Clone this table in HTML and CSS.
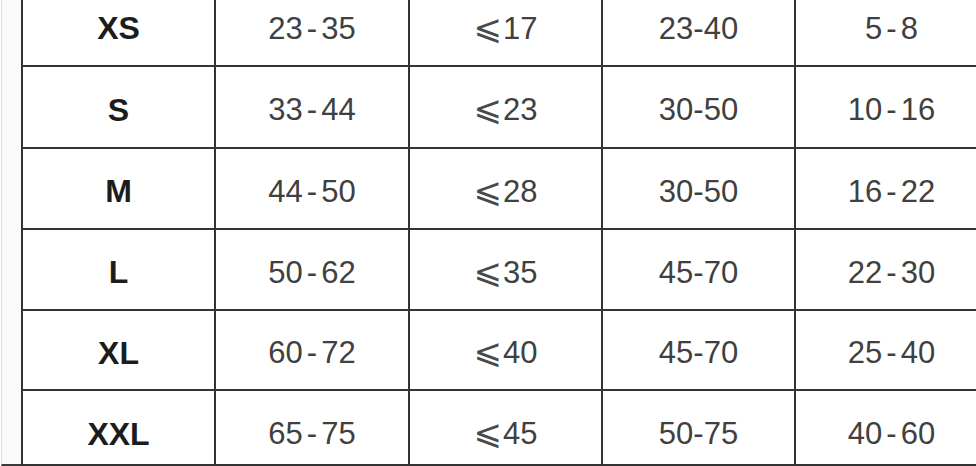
FILE: index.html
```html
<!DOCTYPE html>
<html lang="en">
<head>
<meta charset="utf-8">
<title>Size chart</title>
<link rel="stylesheet" href="styles.css">
</head>
<body>
<div class="page">
  <div class="rail"></div>
  <div class="chart">
    <div class="cell size">XS</div>
    <div class="cell num">23<span class="dash">-</span>35</div>
    <div class="cell num"><span class="le">⩽</span>17</div>
    <div class="cell num">23-40</div>
    <div class="cell num">5<span class="dash">-</span>8</div>

    <div class="cell size">S</div>
    <div class="cell num">33<span class="dash">-</span>44</div>
    <div class="cell num"><span class="le">⩽</span>23</div>
    <div class="cell num">30-50</div>
    <div class="cell num">10<span class="dash">-</span>16</div>

    <div class="cell size">M</div>
    <div class="cell num">44<span class="dash">-</span>50</div>
    <div class="cell num"><span class="le">⩽</span>28</div>
    <div class="cell num">30-50</div>
    <div class="cell num">16<span class="dash">-</span>22</div>

    <div class="cell size">L</div>
    <div class="cell num">50<span class="dash">-</span>62</div>
    <div class="cell num"><span class="le">⩽</span>35</div>
    <div class="cell num">45-70</div>
    <div class="cell num">22<span class="dash">-</span>30</div>

    <div class="cell size">XL</div>
    <div class="cell num">60<span class="dash">-</span>72</div>
    <div class="cell num"><span class="le">⩽</span>40</div>
    <div class="cell num">45-70</div>
    <div class="cell num">25<span class="dash">-</span>40</div>

    <div class="cell size last">XXL</div>
    <div class="cell num last">65<span class="dash">-</span>75</div>
    <div class="cell num last"><span class="le">⩽</span>45</div>
    <div class="cell num last">50-75</div>
    <div class="cell num last">40<span class="dash">-</span>60</div>
  </div>
</div>
</body>
</html>
```

FILE: styles.css
```css
html, body {
  margin: 0;
  padding: 0;
  background: #ffffff;
  overflow: hidden;
}

.page {
  display: flex;
  align-items: flex-start;
  width: 976px;
  height: 466px;
  overflow: hidden;
}

.rail {
  flex: 0 0 19px;
  margin-left: 1px;
  height: 464px;
  border-left: 1px solid #dcdcdc;
  border-bottom: 2px solid #3a3a3a;
  background: #fafafa;
}

.chart {
  flex: 0 0 auto;
  margin-top: -16px;
  display: grid;
  grid-template-columns: 191px 192px 191px 191px 191px;
  grid-template-rows: 79px 80px 79px 79px 78px 73px;
  gap: 2px;
  padding: 2px;
  background: #333333;
}

.cell {
  background: #ffffff;
  display: flex;
  align-items: center;
  justify-content: center;
  padding-top: 6px;
  box-sizing: border-box;
  font-family: "Liberation Sans", Arial, sans-serif;
  white-space: nowrap;
}

.cell.last {
  padding-top: 13px;
}

.size {
  font-weight: bold;
  font-size: 32px;
  color: #1c1c1c;
}

.num {
  font-size: 31px;
  color: #404040;
}

.dash {
  padding: 0 4px;
}

.le {
  font-family: "DejaVu Sans", sans-serif;
  font-size: 34px;
  margin-right: 1px;
  position: relative;
  top: -2px;
  color: #4a4a4a;
}
```
